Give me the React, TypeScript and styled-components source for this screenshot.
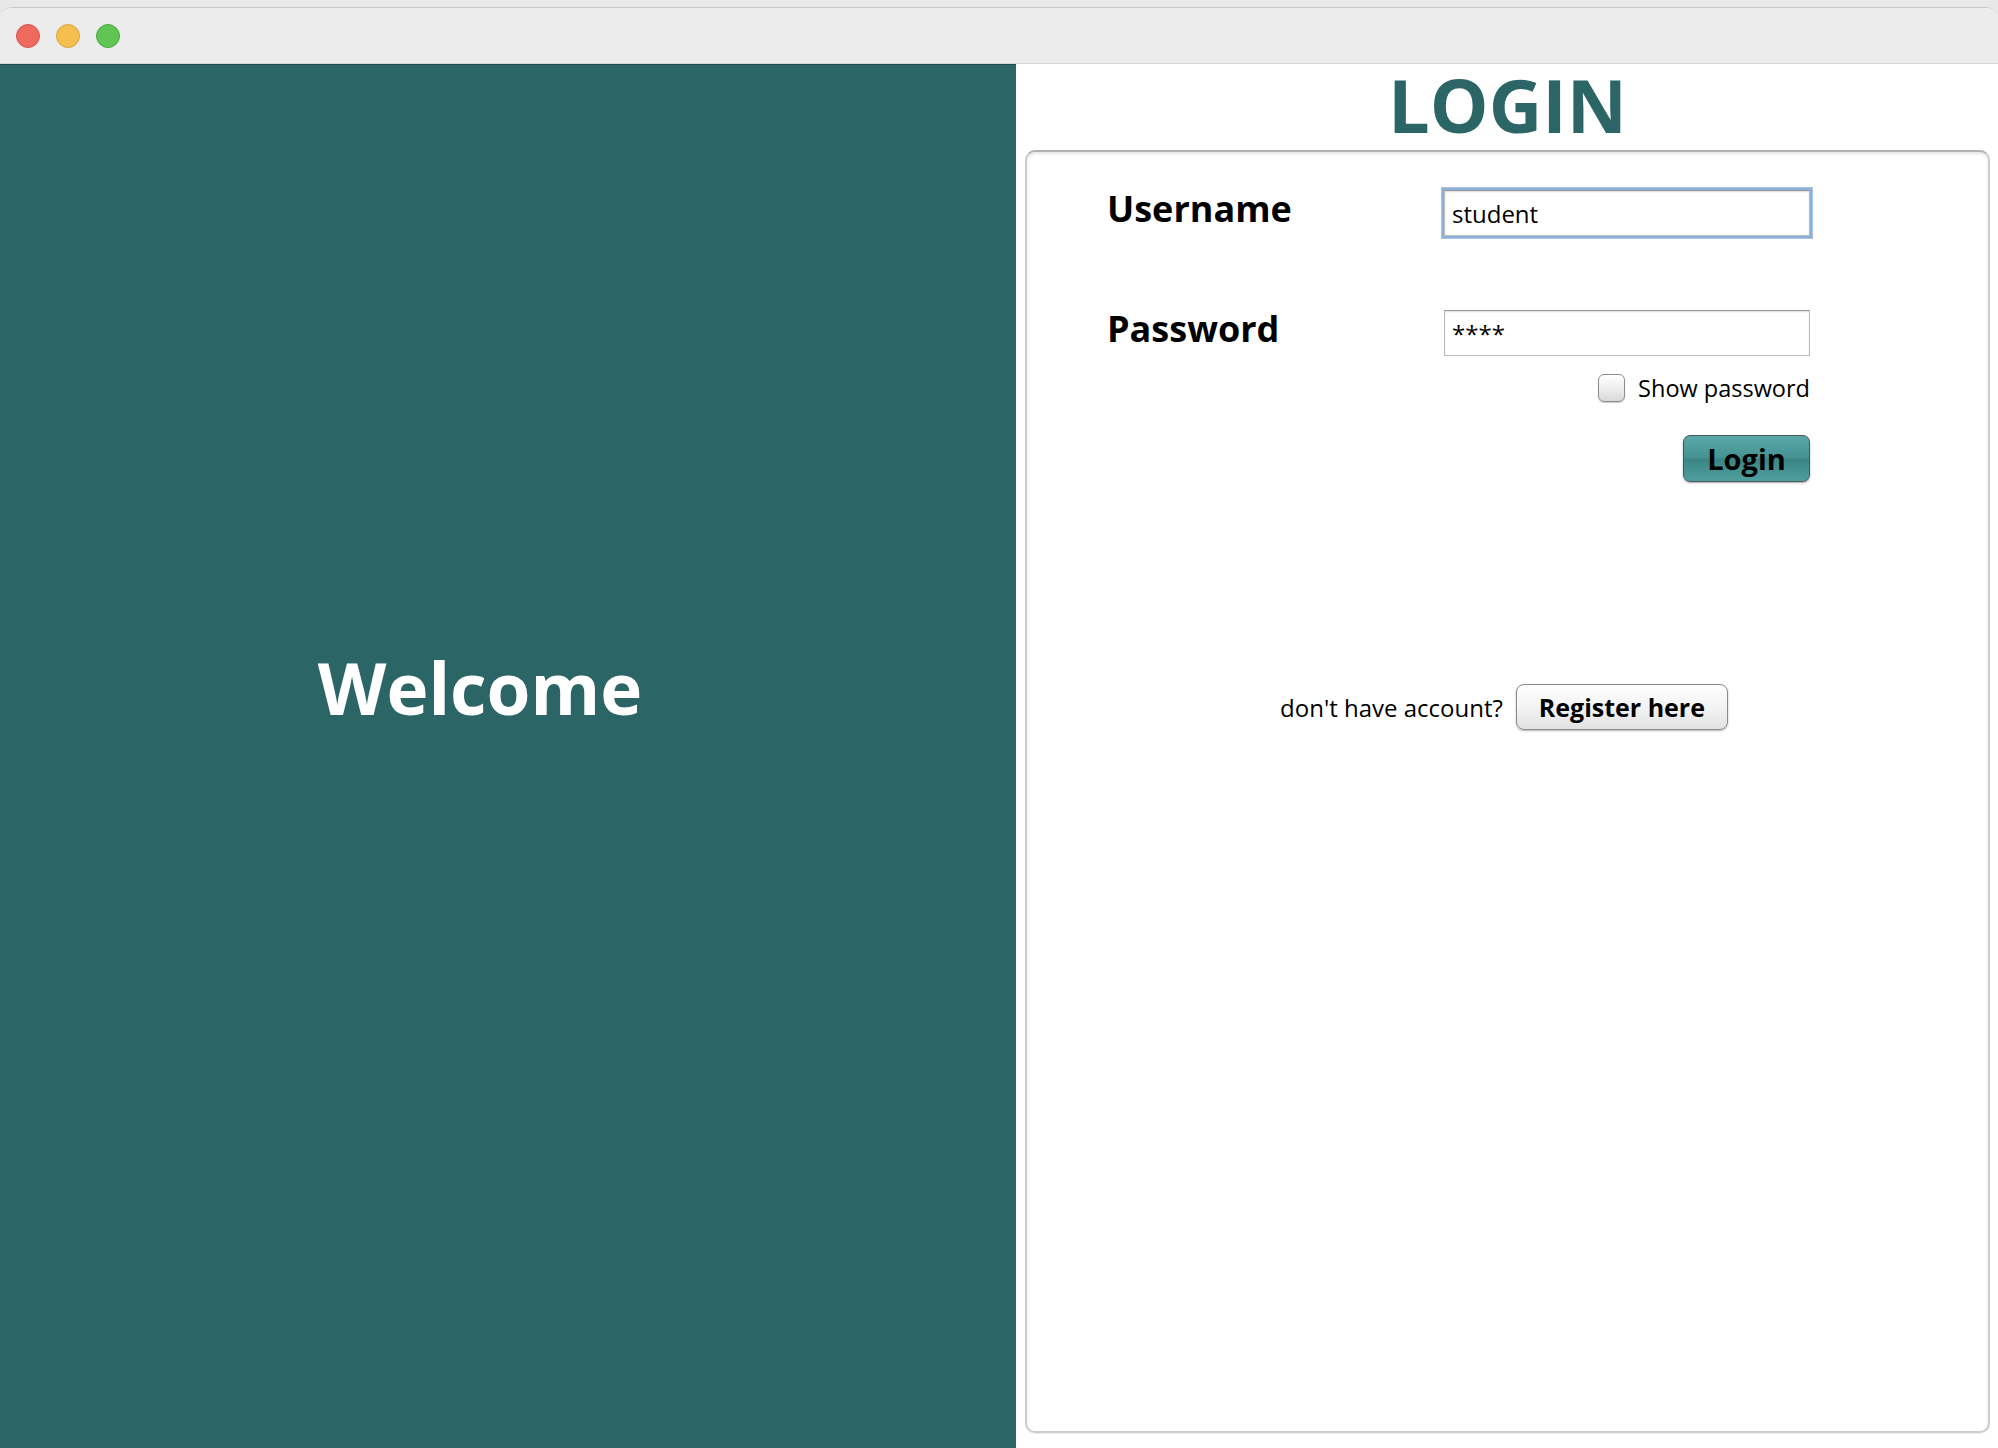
import { createGlobalStyle } from "styled-components";
import styled from "styled-components";

const GlobalStyle = createGlobalStyle`
  html,
  body {
    margin: 0;
    padding: 0;
    background: #e8e8e8;
  }

  #root {
    min-height: 100vh;
  }

  * {
    box-sizing: border-box;
  }
`;

const Page = styled.div`
  display: flex;
  flex-direction: column;
  min-height: 100vh;
  padding-top: 7px;
  font-family: "Open Sans", "DejaVu Sans", sans-serif;
`;

const Window = styled.div`
  flex: 1;
  display: flex;
  flex-direction: column;
  border-top: 1px solid #c9c9c9;
  border-radius: 12px 12px 0 0;
  overflow: hidden;
  background: #ffffff;
`;

const TitleBar = styled.header`
  display: flex;
  align-items: center;
  gap: 16px;
  height: 56px;
  padding: 0 16px;
  background: #ececec;
  border-bottom: 1px solid #d6d6d6;
`;

const Light = styled.span<{ $fill: string; $ring: string }>`
  width: 24px;
  height: 24px;
  border-radius: 50%;
  background: ${(p) => p.$fill};
  border: 1px solid ${(p) => p.$ring};
`;

const Body = styled.main`
  flex: 1;
  display: grid;
  grid-template-columns: 1016px 1fr;
`;

const WelcomePanel = styled.section`
  display: flex;
  align-items: center;
  justify-content: center;
  padding: 0 56px 137px 0;
  background: #2b6566;
  box-shadow: inset 0 1px 0 #1f4d4e;
`;

const WelcomeText = styled.h1`
  margin: 0;
  color: #ffffff;
  font-size: 71px;
  font-weight: 700;
`;

const LoginPanel = styled.section`
  display: flex;
  flex-direction: column;
  padding: 0 8px 15px 9px;
  background: #ffffff;
`;

const Title = styled.h2`
  margin: 0;
  height: 86px;
  line-height: 82px;
  text-align: center;
  color: #2b6566;
  font-size: 74px;
  font-weight: 700;
`;

const Card = styled.div`
  flex: 1;
  display: flex;
  flex-direction: column;
  padding: 38px 178px 0 80px;
  border: 2px solid #cdcdcd;
  border-top-color: #b2b2b2;
  border-radius: 10px;
  box-shadow:
    inset 0 2px 3px rgba(0, 0, 0, 0.1),
    0 1px 1px rgba(0, 0, 0, 0.08);
`;

const FieldRow = styled.div<{ $top?: number }>`
  display: flex;
  align-items: flex-start;
  margin-top: ${(p) => p.$top ?? 0}px;
`;

const Label = styled.label`
  flex: 1;
  line-height: 38px;
  color: #000000;
  font-size: 36px;
  font-weight: 700;
`;

const Field = styled.input<{ $focused?: boolean }>`
  width: 366px;
  height: 46px;
  padding: 0 7px;
  border: 1px solid #bdbdbd;
  border-top-color: #979797;
  border-radius: 0;
  background: #ffffff;
  color: #000000;
  font-family: "Open Sans", "DejaVu Sans", sans-serif;
  font-size: 24px;
  outline: none;
  box-shadow: inset 0 1px 2px rgba(0, 0, 0, 0.14)
    ${(p) => (p.$focused ? ", 0 0 0 2px #8cb0dc, 0 0 0 3px #a9c3e4" : "")};
`;

const OptionRow = styled.label`
  display: flex;
  align-items: center;
  justify-content: flex-end;
  gap: 13px;
  margin-top: 16px;
  color: #000000;
  font-size: 23.5px;
`;

const CheckBox = styled.span`
  width: 27px;
  height: 28px;
  border: 1.5px solid #8c8c8c;
  border-radius: 6px;
  background: linear-gradient(#ffffff, #f0f0f0 45%, #d9d9d9);
  box-shadow: 0 1px 1px rgba(0, 0, 0, 0.2);
`;

const ActionRow = styled.div`
  display: flex;
  justify-content: flex-end;
  margin-top: 31px;
`;

// spans the whole card width, so the pair sits in the middle of the card
const RegisterRow = styled.div`
  display: flex;
  align-items: center;
  justify-content: center;
  gap: 13px;
  margin: 202px -178px 0 -80px;
  padding-right: 7px;
`;

const LoginButton = styled.button`
  width: 127px;
  height: 47px;
  padding: 0;
  border: 1.5px solid #4a5757;
  border-radius: 7px;
  background: linear-gradient(#5aa9a8, #449291 48%, #3a8584 52%, #4f9f9e);
  box-shadow: 0 1px 2px rgba(0, 0, 0, 0.35);
  color: #000000;
  font-family: "Open Sans", "DejaVu Sans", sans-serif;
  font-size: 29px;
  font-weight: 700;
`;

const Hint = styled.span`
  color: #000000;
  font-size: 24px;
`;

const RegisterButton = styled.button`
  width: 212px;
  height: 46px;
  padding: 0;
  border: 1.5px solid #8a8a8a;
  border-radius: 8px;
  background: linear-gradient(#ffffff, #f3f3f3 50%, #e2e2e2);
  box-shadow: 0 1px 2px rgba(0, 0, 0, 0.3);
  color: #000000;
  font-family: "Open Sans", "DejaVu Sans", sans-serif;
  font-size: 25px;
  font-weight: 700;
`;

const App = () => {
  return (
    <Page>
      <GlobalStyle />
      <Window>
        <TitleBar>
          <Light $fill="#ee6a5f" $ring="#d8564c" />
          <Light $fill="#f5bf4f" $ring="#d9a443" />
          <Light $fill="#61c554" $ring="#4fa842" />
        </TitleBar>
        <Body>
          <WelcomePanel>
            <WelcomeText>Welcome</WelcomeText>
          </WelcomePanel>
          <LoginPanel>
            <Title>LOGIN</Title>
            <Card>
              <FieldRow>
                <Label>Username</Label>
                <Field $focused type="text" defaultValue="student" />
              </FieldRow>
              <FieldRow $top={74}>
                <Label>Password</Label>
                <Field type="text" defaultValue="****" />
              </FieldRow>
              <OptionRow>
                <CheckBox />
                Show password
              </OptionRow>
              <ActionRow>
                <LoginButton type="button">Login</LoginButton>
              </ActionRow>
              <RegisterRow>
                <Hint>don't have account?</Hint>
                <RegisterButton type="button">Register here</RegisterButton>
              </RegisterRow>
            </Card>
          </LoginPanel>
        </Body>
      </Window>
    </Page>
  );
};

export default App;
